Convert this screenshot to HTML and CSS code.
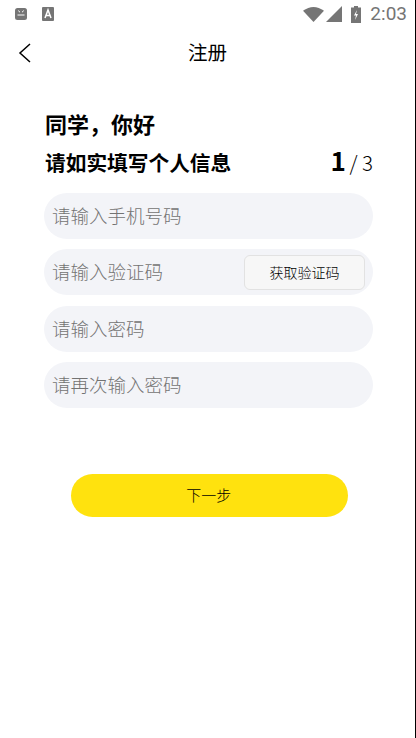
FILE: index.html
```html
<!DOCTYPE html>
<html lang="zh">
<head>
<meta charset="utf-8">
<title>注册</title>
<link rel="stylesheet" href="styles.css">
</head>
<body>
<div class="screen">
  <div class="status">
    <div class="status-left">
      <svg class="ic-a" viewBox="0 0 12 12"><rect x="0" y="0" width="12" height="12" rx="2.500" fill="#757575"/><path d="M3.500 2.500q.5 1.500 1.500 1.500M8.500 2.500q-.5 1.500-1.500 1.500M2.500 7h7" stroke="#fff" stroke-width="1" fill="none"/></svg>
      <svg class="ic-b" viewBox="0 0 12 14"><rect width="12" height="14" rx="1" fill="#757575"/><path d="M3 11 6 3l3 8M4.200 8.500h3.600" stroke="#fff" stroke-width="1.500" fill="none"/></svg>
    </div>
    <div class="status-right">
      <svg class="ic-wifi" viewBox="0 0 21 15"><path d="M0 3.800Q10.500-3.800 21 3.800L10.500 15Z" fill="#757575"/></svg>
      <svg class="ic-signal" viewBox="0 0 16 16"><path d="M16 0V16H0Z" fill="#757575"/></svg>
      <svg class="ic-batt" viewBox="0 0 10 17"><path d="M3 0h4v1.500h3V17H0V1.500h3Z" fill="#757575"/><path d="M6 4 3 9.500h2l-1 4.500 3-6H5Z" fill="#fff"/></svg>
      <span class="clock">2:03</span>
    </div>
  </div>
  <header class="nav">
    <svg class="back" viewBox="0 0 14 20"><path d="M12 1 2 10l10 9" fill="none" stroke="#000" stroke-width="1.500"/></svg>
    <h1 class="nav-title">注册</h1>
  </header>
  <main class="content">
    <h2 class="hello">同学，你好</h2>
    <div class="sub">
      <span class="sub-text">请如实填写个人信息</span>
      <span class="steps"><b class="step-now">1</b><span class="step-rest"> / 3</span></span>
    </div>
    <form class="fields">
      <div class="field">请输入手机号码</div>
      <div class="field field-code"><span>请输入验证码</span><span class="code-btn">获取验证码</span></div>
      <div class="field">请输入密码</div>
      <div class="field">请再次输入密码</div>
    </form>
    <div class="next">下一步</div>
  </main>
</div>
</body>
</html>
```
FILE: styles.css
```css
* { box-sizing: border-box; }
html, body { margin: 0; padding: 0; }
body { background: #fff; font-family: "Noto Sans CJK SC", "Noto Sans", sans-serif; color: #000; }
.screen { width: 416px; height: 738px; overflow: hidden; border-right: 1px solid #000; }
.status { height: 28px; display: flex; justify-content: space-between; align-items: center; padding: 0 8px 0 15px; }
.status-left { display: flex; align-items: center; gap: 15px; }
.ic-a { width: 12px; height: 12px; }
.ic-b { width: 12px; height: 14px; }
.status-right { display: flex; align-items: center; }
.ic-wifi { width: 21px; height: 15px; margin-right: 2px; }
.ic-signal { width: 16px; height: 16px; margin-right: 9px; }
.ic-batt { width: 10px; height: 17px; margin-right: 9px; }
.clock { font: 19px/20px Roboto, sans-serif; color: #757575; }
.nav { height: 50px; display: flex; align-items: center; justify-content: center; position: relative; }
.back { position: absolute; left: 18px; top: 15px; width: 14px; height: 20px; }
.nav-title { margin: 0; font-size: 19.500px; font-weight: 400; line-height: 48px; padding-bottom: 2px; }
.content { padding: 29px 42px 0 44px; }
.hello { margin: 0; font-size: 22px; font-weight: 700; line-height: 32px; padding-left: 1px; }
.sub { display: flex; justify-content: space-between; align-items: center; height: 40px; margin-top: 3px; padding-left: 1px; }
.sub-text { font-size: 20.700px; font-weight: 700; }
.steps { line-height: 40px; }
.step-now { font-size: 26px; font-weight: 700; margin-right: -1px; }
.step-rest { font-size: 20.500px; font-weight: 300; color: #000; }
.fields { display: flex; flex-direction: column; gap: 10.500px; margin-top: 10.500px; }
.field { height: 46px; border-radius: 23px; background: #f3f4f8; color: #737373; font-size: 18.500px; font-weight: 300; line-height: 44px; padding: 0 0 2px 8px; display: flex; justify-content: space-between; align-items: center; }
.field-code { padding-right: 8px; padding-bottom: 0; }
.field-code > span:first-child { padding-bottom: 2px; }
.code-btn { width: 121px; height: 35px; border: 1px solid #e2e2e2; border-radius: 6px; background: #f7f7f7; color: #000; font-size: 14px; font-weight: 300; line-height: 32px; text-align: center; }
.next { width: 277.500px; height: 43px; margin: 65.500px 0 0 26.500px; border-radius: 22px; background: #ffe20e; font-size: 15px; font-weight: 300; line-height: 41px; text-align: center; padding-right: 1px; }
```
